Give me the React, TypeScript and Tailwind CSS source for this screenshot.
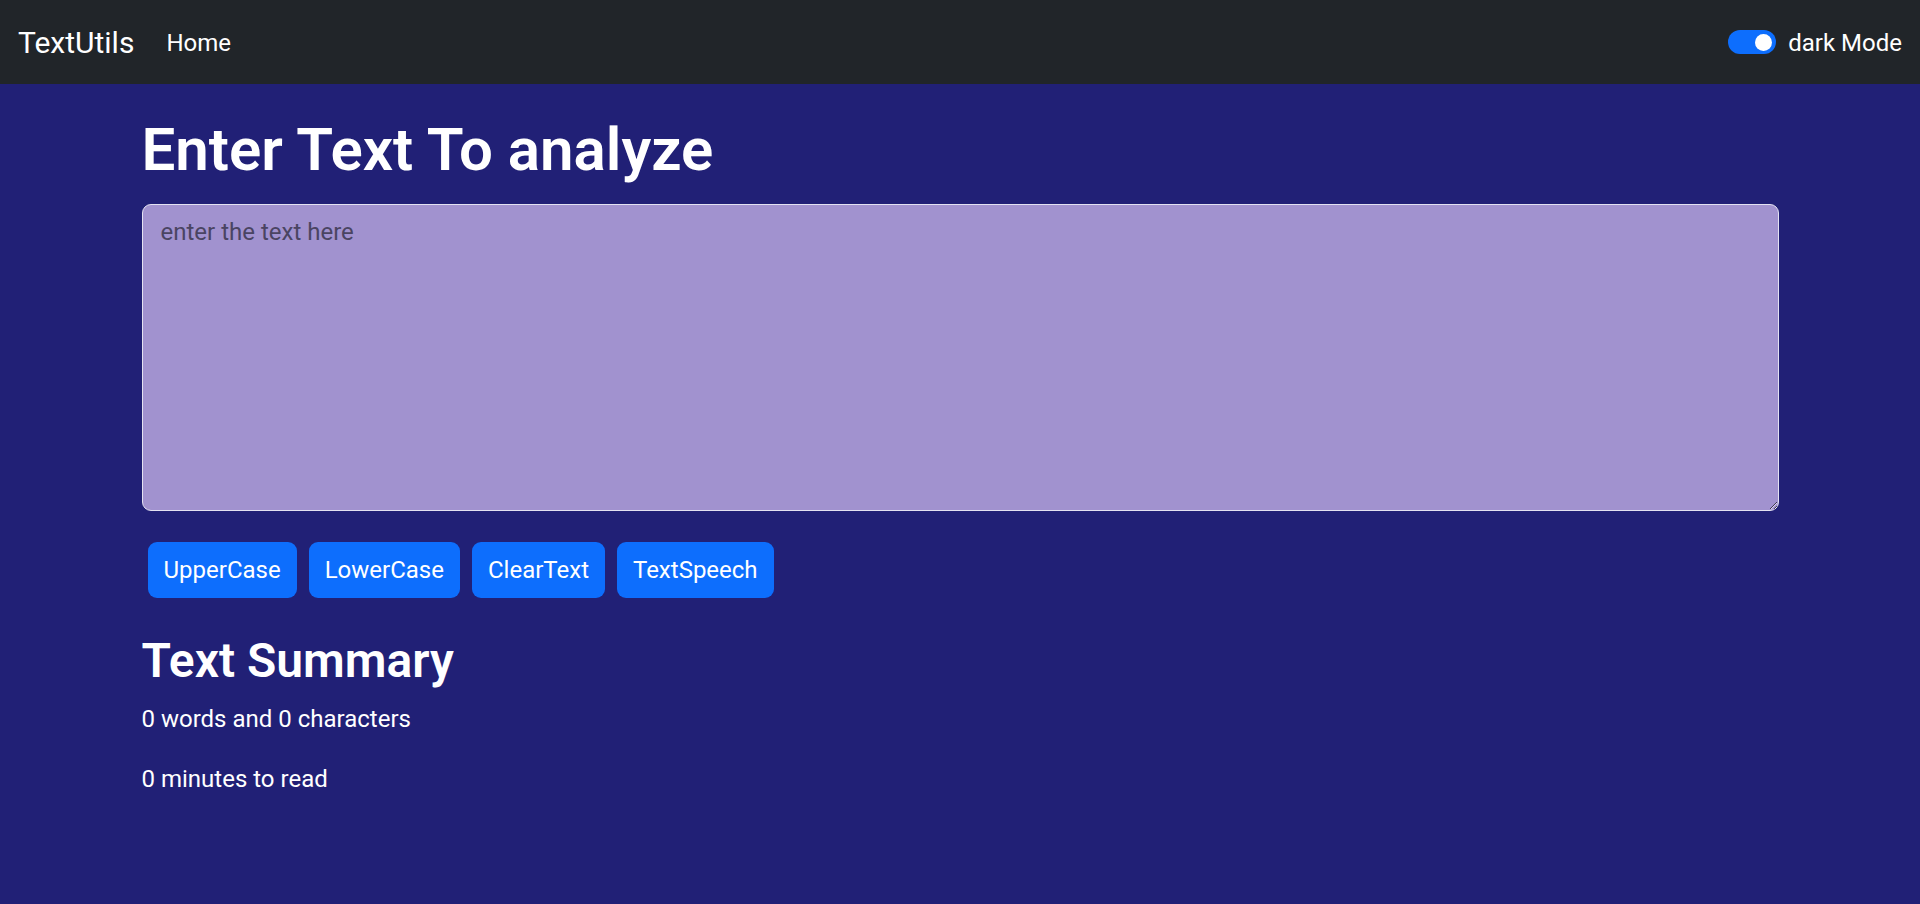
import { useState } from "react";

const font = "font-['Roboto','Liberation_Sans',sans-serif]";

export default function App() {
  const [text, setText] = useState("");
  const [dark, setDark] = useState(true);

  const words = text.split(/\s+/).filter((w) => w.length > 0).length;
  const buttons = ["UpperCase", "LowerCase", "ClearText", "TextSpeech"];

  return (
    <div className={`min-h-screen bg-[#212076] text-white ${font}`}>
      <nav className="flex h-[84px] items-center bg-[#212529] pl-[18px] pr-[18px]">
        <span className="mt-[1px] text-[30px] leading-[45px] text-white">TextUtils</span>
        <a href="#" className="ml-[32px] mt-[2px] text-[24px] leading-[36px] text-white">
          Home
        </a>
        <div className="ml-auto flex items-center">
          <button
            onClick={() => setDark(!dark)}
            className="flex h-[24px] w-[48px] items-center justify-end rounded-full bg-[#0d6efd] pr-[4px]"
          >
            <span className="h-[17px] w-[17px] rounded-full bg-white" />
          </button>
          <span className="ml-[12px] mt-[2px] text-[24px] leading-[36px] text-white">dark Mode</span>
        </div>
      </nav>

      <main className="mx-auto w-[1637px] pt-[30px]">
        <h1 className="text-[60px] font-semibold leading-[72px]">Enter Text To analyze</h1>
        <textarea
          value={text}
          onChange={(e) => setText(e.target.value)}
          placeholder="enter the text here"
          className="mt-[18px] block h-[307px] w-full rounded-[9px] border border-[#e4e2f2] bg-[#a192cf] px-[18px] py-[9px] text-[24px] leading-[36px] text-[#212529] outline-none placeholder:text-[#4a4462]"
        />

        <div className="ml-[6px] mt-[31px] flex gap-[12px]">
          {buttons.map((b) => (
            <button
              key={b}
              className="h-[56px] rounded-[9px] bg-[#0d6efd] px-[16px] text-[24px] leading-[36px] text-white"
            >
              {b}
            </button>
          ))}
        </div>

        <h2 className="mt-[34px] text-[48px] font-semibold leading-[58px]">Text Summary</h2>
        <p className="mt-[11px] text-[24px] leading-[36px]">
          {words} words and {text.length} characters
        </p>
        <p className="mt-[24px] text-[24px] leading-[36px]">{0.008 * words} minutes to read</p>
      </main>
    </div>
  );
}
